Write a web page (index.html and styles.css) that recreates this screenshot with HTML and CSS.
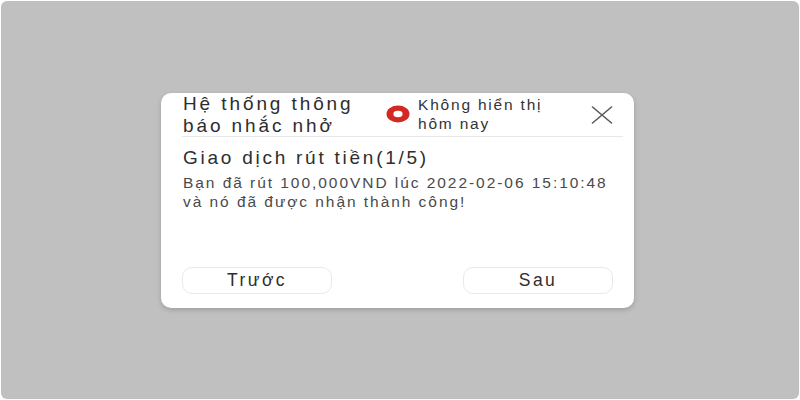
FILE: index.html
```html
<!DOCTYPE html>
<html lang="vi">
<head>
<meta charset="utf-8">
<title>Hệ thống thông báo nhắc nhở</title>
<link rel="stylesheet" href="styles.css">
</head>
<body>
<div class="screen">
  <div class="dialog">
    <div class="dialog-header">
      <div class="dialog-title">Hệ thống thông báo nhắc nhở</div>
      <label class="hide-today">
        <svg class="radio" width="24" height="18" viewBox="0 0 24 18">
          <ellipse cx="12" cy="9" rx="11.5" ry="8.5" fill="#d22a22"/>
          <ellipse cx="12" cy="9" rx="4.6" ry="3.2" fill="#ffffff"/>
        </svg>
        <span class="hide-text">Không hiển thị<br>hôm nay</span>
      </label>
      <button class="close" aria-label="Đóng">
        <svg width="22" height="18" viewBox="0 0 22 18">
          <path d="M1.5 1 L20.5 17 M20.5 1 L1.5 17" stroke="#5a5a5a" stroke-width="1.6" fill="none" stroke-linecap="round"/>
        </svg>
      </button>
    </div>
    <div class="dialog-body">
      <div class="msg-title">Giao dịch rút tiền(1/5)</div>
      <div class="msg-text">Bạn đã rút 100,000VND lúc 2022-02-06 15:10:48<br>và nó đã được nhận thành công!</div>
    </div>
    <div class="dialog-actions">
      <button class="btn">Trước</button>
      <button class="btn">Sau</button>
    </div>
  </div>
</div>
</body>
</html>
```

FILE: styles.css
```css
html, body {
  margin: 0;
  padding: 0;
  background: #ffffff;
}

body {
  font-family: "Liberation Sans", Arial, sans-serif;
}

.screen {
  box-sizing: border-box;
  margin: 1px;
  width: 798px;
  height: 398px;
  background: #c0c0c0;
  border-radius: 6px;
  display: flex;
  align-items: center;
  justify-content: center;
  padding-right: 5px;
}

.dialog {
  box-sizing: border-box;
  width: 473px;
  height: 215px;
  background: #ffffff;
  border-radius: 10px;
  box-shadow: 0 2px 5px rgba(0, 0, 0, 0.18);
  padding: 0 21px 14px 21px;
  display: flex;
  flex-direction: column;
}

.dialog-header {
  display: flex;
  align-items: center;
  height: 43px;
  border-bottom: 1px solid #e8e8e8;
  margin-right: -10px;
  padding-right: 10px;
}

.dialog-title {
  width: 196px;
  font-size: 19px;
  line-height: 22px;
  letter-spacing: 2.9px;
  color: #2e2e2e;
  align-self: flex-start;
  margin-left: 1px;
}

.hide-today {
  display: flex;
  align-items: center;
  margin-left: 7px;
}

.radio {
  display: block;
  flex: none;
}

.hide-text {
  margin-left: 8px;
  font-size: 15.5px;
  line-height: 19px;
  letter-spacing: 1.8px;
  color: #333333;
}

.close {
  margin-left: auto;
  padding: 0;
  border: 0;
  background: none;
  display: flex;
  margin-top: 2px;
}

.close svg {
  display: block;
}

.dialog-body {
  padding-top: 9px;
  flex: 1;
}

.msg-title {
  font-size: 19px;
  line-height: 24px;
  letter-spacing: 2.75px;
  color: #2e2e2e;
  margin-left: 1px;
}

.msg-text {
  margin-top: 3px;
  font-size: 15.5px;
  line-height: 19px;
  letter-spacing: 1.95px;
  color: #4a4a4a;
  margin-left: 1px;
}

.dialog-actions {
  display: flex;
  justify-content: space-between;
}

.btn {
  box-sizing: border-box;
  width: 150px;
  height: 27px;
  border: 1px solid #e9e9e9;
  border-radius: 10px;
  background: #ffffff;
  font-family: "Liberation Sans", Arial, sans-serif;
  font-size: 17.5px;
  letter-spacing: 2.4px;
  color: #2e2e2e;
  padding: 0;
}
```
